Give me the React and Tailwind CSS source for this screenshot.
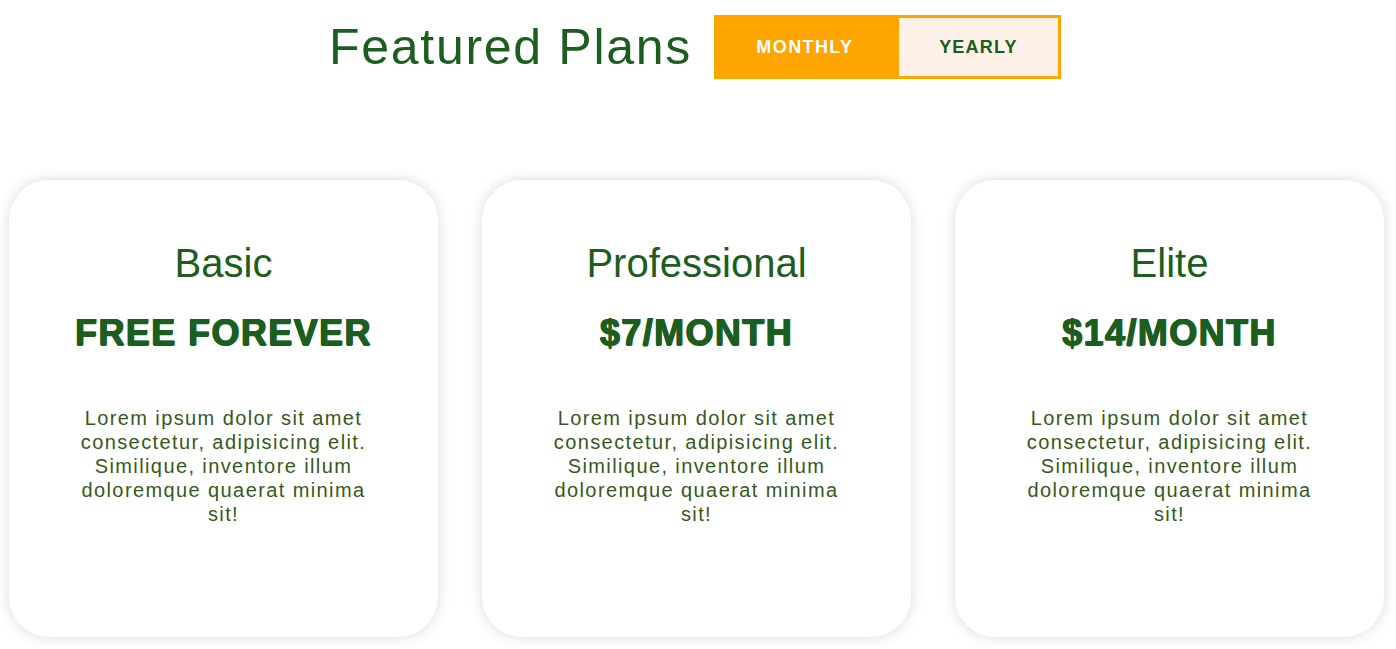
import React from 'react';

const plans = [
  { name: 'Basic', price: 'FREE FOREVER' },
  { name: 'Professional', price: '$7/MONTH' },
  { name: 'Elite', price: '$14/MONTH' },
];

const desc =
  'Lorem ipsum dolor sit amet consectetur, adipisicing elit. Similique, inventore illum doloremque quaerat minima sit!';

export default function App() {
  return (
    <div className="min-h-screen bg-white font-['Liberation_Sans',Arial,sans-serif] text-[#1b5e20]">
      {/* Header */}
      <div className="flex items-center justify-center gap-[22px] pt-[15px] pr-[6px]">
        <h1 className="text-[50px] leading-[64px] tracking-[1.7px] font-normal">Featured Plans</h1>
        <div className="flex h-[64px] border-[3px] border-[#ffa500]">
          <button className="w-[182px] pr-[6px] bg-[#ffa500] text-white text-[18px] font-bold tracking-[1.4px]">
            MONTHLY
          </button>
          <button className="w-[159px] bg-[#fcf0e8] text-[#1b5e20] text-[18px] font-bold tracking-[1.2px]">
            YEARLY
          </button>
        </div>
      </div>

      {/* Cards */}
      <div className="flex gap-[44px] pl-[9px] mt-[101px]">
        {plans.map((p) => (
          <div
            key={p.name}
            className="w-[429px] h-[457px] rounded-[40px] bg-white shadow-[0_0_14px_rgba(0,0,0,0.15)] flex flex-col items-center pt-[60px] text-center"
          >
            <h2 className="text-[40px] leading-[46px] font-normal">{p.name}</h2>
            <p className="mt-[26px] text-[36px] leading-[42px] font-black tracking-[1.4px] [text-shadow:0.7px_0_0_#1b5e20,-0.7px_0_0_#1b5e20,0_0.7px_0_#1b5e20,0_-0.5px_0_#1b5e20]">
              {p.price}
            </p>
            <p className="mt-[52px] w-[300px] text-[20px] leading-[24px] tracking-[1.4px] text-[#34591c]">
              {desc}
            </p>
          </div>
        ))}
      </div>
    </div>
  );
}
